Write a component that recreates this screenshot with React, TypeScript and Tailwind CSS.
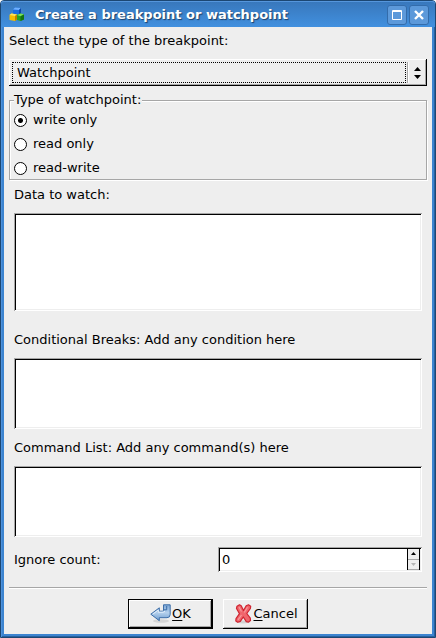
import React, { useState } from 'react';

const raised =
  'bg-[#eeeeee] shadow-[inset_-1px_-1px_0_#000,inset_1px_1px_0_#fff,inset_-2px_-2px_0_#a6a6a6]';
const sunken =
  'bg-white shadow-[inset_1px_1px_0_#a6a6a6,inset_-1px_-1px_0_#fff,inset_2px_2px_0_#000,inset_-2px_-2px_0_#eeeeee]';

function AppIcon() {
  return (
    <svg width="16" height="16" viewBox="0 0 16 16" aria-hidden="true">
      <path d="M4 2.500 6 .5l6 .5v6L10 9 4 8z" fill="#1c6ddd" />
      <path d="M4 2.500 6 .5l6 .5-2 2z" fill="#6fb0ff" />
      <path d="M10 3l2-2v6l-2 2z" fill="#0c48a8" />
      <path d="M.5 8l2-1.500 5.500 1v5L6 14 .5 13z" fill="#f7bd00" />
      <path d="M.5 8l2-1.500 5.500 1L6 9z" fill="#ffe45c" />
      <path d="M6 9l2-1.500v5L6 14z" fill="#bd8200" />
      <path d="M8 8l3.500-1.500L15 7.500v5L11.500 14 8 13z" fill="#27a322" />
      <path d="M8 8l3.500-1.500L15 7.500 11.500 9.300z" fill="#7be05a" />
      <path d="M11.500 9.300 15 7.500v5L11.500 14z" fill="#137414" />
    </svg>
  );
}

function OkIcon() {
  return (
    <svg width="22" height="20" viewBox="0 0 22 20" aria-hidden="true">
      <defs>
        <linearGradient id="ok" x1="0" y1="0" x2="0" y2="1">
          <stop offset="0" stopColor="#7ba6d6" />
          <stop offset="0.5" stopColor="#b4d0ec" />
          <stop offset="1" stopColor="#6c9bd0" />
        </linearGradient>
      </defs>
      <ellipse cx="11" cy="17" rx="8" ry="1.800" fill="#d6d6d6" />
      <path
        d="M13.500 .8h6.700v9.700q0 3.200-3.200 3.200H9.300v3L.8 10.200 9.300 3.800v3.400h3.200q1 0 1-1z"
        fill="url(#ok)"
        stroke="#3d6ea8"
        strokeLinejoin="round"
      />
      <path d="M8.300 6v2.200h5.200q1.200 0 1.200-1.200M8.300 6 2.800 10.200" fill="none" stroke="#e6f1fc" />
      <path d="M13.500 5.800h3.200V2" fill="none" stroke="#3d6ea8" />
    </svg>
  );
}

function CancelIcon() {
  return (
    <svg width="20" height="20" viewBox="0 0 20 20" aria-hidden="true">
      <ellipse cx="10" cy="18" rx="7" ry="1.500" fill="#d2d2d2" />
      <path
        d="M4 2.200 6.500.8l1.700 1 2.300 4.700 2.700-4.800 2.300-.9 2.200 1.400-.3 2.300-3.600 5 3.500 4.700.2 2.300-2 1.600-2.200-.5-3-4.600-3 4.400-2.500.9-2-1.300.2-2.300 3.500-5L3.500 4.500z"
        fill="#f0666c"
        stroke="#cf2430"
        strokeWidth="1.200"
        strokeLinejoin="round"
      />
      <path d="M6 3l2.500 4.500M14.500 3.300l-3.200 5.200M8.500 11l-3.500 4.800" fill="none" stroke="#f79a9e" strokeWidth="1.200" />
    </svg>
  );
}

function TitleButton({ label, children }: { label: string; children: React.ReactNode }) {
  return (
    <button
      type="button"
      aria-label={label}
      className="flex h-5 w-5 items-center justify-center rounded-[3px] border border-[#336cab] bg-[#5c99da]"
    >
      {children}
    </button>
  );
}

function TextField({ id, label, className }: { id: string; label: string; className: string }) {
  return (
    <div className="flex flex-col gap-2.5 px-[5px]">
      <label htmlFor={id}>{label}</label>
      <textarea id={id} className={`block w-full resize-none p-1 outline-none ${sunken} ${className}`} />
    </div>
  );
}

const modes = ['write only', 'read only', 'read-write'];

export default function App() {
  const [mode, setMode] = useState('write only');
  const [count, setCount] = useState(0);

  return (
    <div className="bg-white font-['DejaVu_Sans',sans-serif] text-[13px] leading-4 text-black">
      <div className="rounded-t-[4px] border border-[#1c4773] bg-[#3c84d0] shadow-[inset_1px_1px_0_#4e92dc,inset_-1px_-1px_0_#28619f]">
        <header className="flex h-[26px] items-center gap-2.5 rounded-t-[3px] bg-linear-to-b from-[#3877bb] to-[#4190df] pt-0.5 pr-1.5 pl-2 shadow-[inset_0_1px_0_#5596dc]">
          <AppIcon />
          <h1 className="flex-1 font-bold whitespace-nowrap text-white [text-shadow:1px_1px_1px_#1c3f68]">
            Create a breakpoint or watchpoint
          </h1>
          <div className="flex gap-0.5">
            <TitleButton label="Maximize">
              <svg width="10" height="10" viewBox="0 0 10 10" aria-hidden="true">
                <path d="M.5 .5h9v9h-9zM0 1.500h10" stroke="#fff" fill="none" />
              </svg>
            </TitleButton>
            <TitleButton label="Close">
              <svg width="10" height="10" viewBox="0 0 10 10" aria-hidden="true">
                <path d="M1 1l8 8M9 1L1 9" stroke="#fff" strokeWidth="2.400" />
              </svg>
            </TitleButton>
          </div>
        </header>

        <form className="mx-[3px] mb-[3px] flex flex-col bg-[#eeeeee] px-[5px] pt-1.5 pb-[5px]" onSubmit={(e) => e.preventDefault()}>
          <label htmlFor="kind">Select the type of the breakpoint:</label>

          <div className={`mt-2.5 grid h-[27px] grid-cols-1 ${raised}`}>
            <select id="kind" className="col-start-1 row-start-1 w-full appearance-none bg-transparent pr-8 pl-2 outline-none">
              <option>Watchpoint</option>
              <option>Breakpoint</option>
            </select>
            <div className="pointer-events-none col-start-1 row-start-1 flex py-[3px] pr-1.5 pl-[3px]" aria-hidden="true">
              <div className="flex-1 border border-dotted border-black" />
              <div className="ml-px w-0.5 border-l border-[#a6a6a6] bg-white" />
              <svg className="ml-[5px] self-center" width="7" height="12" viewBox="0 0 7 12">
                <path d="M3.500 0L7 4H0zM3.500 12L7 8H0z" fill="#000" />
              </svg>
            </div>
          </div>

          <fieldset className="mt-1.5 border border-[#a6a6a6] px-1 pt-1 pb-[3px] shadow-[inset_1px_1px_0_#fff,1px_1px_0_#fff]">
            <legend className="bg-[#eeeeee] pr-px">Type of watchpoint:</legend>
            <div className="flex flex-col gap-2">
              {modes.map((m) => (
                <label key={m} className="flex items-center gap-1.5">
                  <input
                    type="radio"
                    name="mode"
                    checked={mode === m}
                    onChange={() => setMode(m)}
                    className="h-[13px] w-[13px] appearance-none rounded-full border border-black bg-white checked:bg-[radial-gradient(circle,#000_2px,#fff_3px)]"
                  />
                  {m}
                </label>
              ))}
            </div>
          </fieldset>

          <div className="mt-[7px] flex flex-col">
            <TextField id="data" label="Data to watch:" className="h-[98px]" />
          </div>
          <div className="mt-[21px] flex flex-col gap-[11px]">
            <TextField id="cond" label="Conditional Breaks: Add any condition here" className="h-[71px]" />
            <TextField id="cmds" label="Command List: Add any command(s) here" className="h-[71px]" />
          </div>

          <div className="mt-2.5 grid grid-cols-2 items-center px-[5px]">
            <label htmlFor="ignore">Ignore count:</label>
            <div className={`flex h-[25px] p-0.5 ${sunken}`}>
              <input
                id="ignore"
                type="text"
                inputMode="numeric"
                value={count}
                onChange={(e) => setCount(Number(e.target.value) || 0)}
                className="min-w-0 flex-1 bg-transparent pl-0.5 outline-none"
              />
              <div className="flex w-[13px] flex-col border-x border-black bg-[#eeeeee]">
                <button
                  type="button"
                  aria-label="Increase"
                  onClick={() => setCount(count + 1)}
                  className="flex flex-1 items-center justify-center border-b border-[#a6a6a6]"
                >
                  <svg width="5" height="3" viewBox="0 0 5 3" aria-hidden="true">
                    <path d="M2.500 0L5 3H0z" fill="#000" />
                  </svg>
                </button>
                <button
                  type="button"
                  aria-label="Decrease"
                  disabled={count === 0}
                  onClick={() => setCount(count - 1)}
                  className="flex flex-1 items-center justify-center border-b border-[#a6a6a6]"
                >
                  <svg width="5" height="3" viewBox="0 0 5 3" aria-hidden="true">
                    <path d="M2.500 3L5 0H0z" fill="#b5b5b5" />
                  </svg>
                </button>
              </div>
            </div>
          </div>

          <hr className="mt-[15px] h-0.5 border-0 border-t border-[#a6a6a6] bg-white" />

          <div className="mt-2.5 flex justify-center gap-2.5">
            <button
              type="submit"
              className="flex h-[30px] w-[85px] items-center justify-center bg-[#eeeeee] shadow-[inset_0_0_0_1px_#000,inset_-2px_-2px_0_#000,inset_2px_2px_0_#fff,inset_-3px_-3px_0_#a6a6a6]"
            >
              <OkIcon />
              <span>
                <span className="underline underline-offset-2">O</span>K
              </span>
            </button>
            <button type="button" className={`flex h-[30px] w-[85px] items-center justify-center ${raised}`}>
              <CancelIcon />
              <span>
                <span className="underline underline-offset-2">C</span>ancel
              </span>
            </button>
          </div>
        </form>
      </div>
    </div>
  );
}
